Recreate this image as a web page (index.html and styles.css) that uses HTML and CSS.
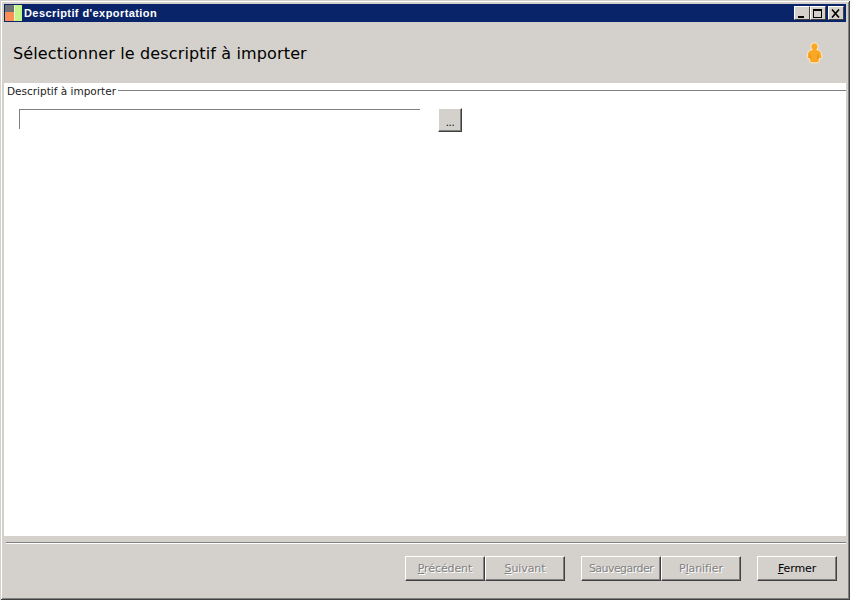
FILE: index.html
```html
<!DOCTYPE html>
<html lang="fr">
<head>
<meta charset="utf-8">
<title>Descriptif d'exportation</title>
<link rel="stylesheet" href="styles.css">
</head>
<body>
<div class="window">
  <div class="titlebar">
    <svg class="app-icon" width="17" height="16" viewBox="0 0 17 16">
      <rect x="0" y="0" width="9" height="7" fill="#6f7274"/>
      <rect x="0" y="7" width="9" height="9" fill="#fb8f55"/>
      <rect x="9" y="0" width="8" height="16" fill="#c5f58a"/>
      <rect x="9" y="0" width="1" height="16" fill="#e8ffd0"/>
    </svg>
    <span class="title">Descriptif d'exportation</span>
    <div class="caption-buttons">
      <button class="cap-btn"><svg width="10" height="9" viewBox="0 0 10 9"><rect x="1" y="7" width="6" height="2" fill="#000"/></svg></button>
      <button class="cap-btn"><svg width="10" height="9" viewBox="0 0 10 9"><path d="M0 0h9v9H0zM1 2v6h7V2z" fill="#000" fill-rule="evenodd"/></svg></button>
      <button class="cap-btn cap-close"><svg width="10" height="9" viewBox="0 0 10 9"><path d="M1 0.5l7 8M8 0.5l-7 8" stroke="#000" stroke-width="1.6" fill="none"/></svg></button>
    </div>
  </div>
  <header class="header">
    <h1 class="heading">Sélectionner le descriptif à importer</h1>
    <svg class="person" width="18" height="22" viewBox="0 0 18 22">
      <path d="M9 .7a4 4 0 0 1 2.700 7c3 .4 4.500 2 4.800 4.300l.4 3.300c.1.800-.4 1.300-1.100 1.300h-1.500l-.3 3.600c0 .4-.3.600-.7.600H5.700c-.4 0-.7-.2-.7-.6l-.3-3.600H3.200c-.7 0-1.200-.5-1.100-1.300l.4-3.300c.3-2.300 1.800-3.900 4.800-4.300A4 4 0 0 1 9 .7z" fill="#fba726" stroke="#fdeccb" stroke-width="1"/>
      <path d="M5 12.500l.3 4.400M13 12.500l-.3 4.400" stroke="#e08c14" stroke-width="1" fill="none"/>
    </svg>
  </header>
  <main class="content">
    <div class="group-head">
      <span class="group-label">Descriptif à importer</span>
      <span class="group-line"></span>
    </div>
    <div class="file-row">
      <div class="file-input"></div>
      <button class="browse">...</button>
    </div>
  </main>
  <footer class="footer">
    <div class="separator"></div>
    <div class="actions">
      <div class="btn-group">
        <button class="btn" disabled><u>P</u>récédent</button>
        <button class="btn" disabled><u>S</u>uivant</button>
      </div>
      <div class="btn-group">
        <button class="btn btn-tight" disabled>Sauvegarder</button>
        <button class="btn" disabled>P<u>l</u>anifier</button>
      </div>
      <button class="btn"><u>F</u>ermer</button>
    </div>
  </footer>
</div>
</body>
</html>
```
FILE: styles.css
```css
html, body {
  margin: 0;
  padding: 0;
  height: 100%;
  overflow: hidden;
}
body {
  font-family: "DejaVu Sans", Verdana, sans-serif;
  font-size: 11px;
  color: #000;
  background: #d4d1cc;
}
.window {
  box-sizing: border-box;
  width: 850px;
  height: 600px;
  padding: 4px;
  display: flex;
  flex-direction: column;
  background: #d4d1cc;
  box-shadow: inset 1px 1px 0 #d4d1cc, inset -1px -1px 0 #404040, inset 2px 2px 0 #fff, inset -2px -2px 0 #808080;
}
.titlebar {
  height: 18px;
  flex: none;
  display: flex;
  align-items: center;
  background: #0a246a;
  color: #fff;
  padding: 0 2px 0 1px;
}
.app-icon {
  flex: none;
  margin-right: 2px;
}
.title {
  font-family: "Liberation Sans", Arial, sans-serif;
  font-weight: 700;
  font-size: 11px;
  letter-spacing: 0.42px;
  white-space: nowrap;
}
.caption-buttons {
  margin-left: auto;
  display: flex;
}
.cap-btn {
  box-sizing: border-box;
  width: 16px;
  height: 14px;
  padding: 0;
  display: flex;
  align-items: center;
  justify-content: center;
  background: #d4d1cc;
  border: 1px solid;
  border-color: #fff #404040 #404040 #fff;
}
.cap-close {
  margin-left: 2px;
}
.header {
  height: 61px;
  flex: none;
  box-sizing: border-box;
  display: flex;
  align-items: center;
  justify-content: space-between;
  padding: 1px 23px 0 9px;
}
.heading {
  margin: 0;
  font-size: 16px;
  font-weight: 400;
  letter-spacing: 0.14px;
  white-space: nowrap;
}
.person {
  flex: none;
}
.content {
  flex: 1;
  min-height: 0;
  background: #fff;
  padding-top: 1px;
}
.group-head {
  display: flex;
  align-items: center;
  height: 13px;
  padding-left: 3px;
}
.group-label {
  font-size: 10.5px;
  white-space: nowrap;
  color: #222;
}
.group-line {
  flex: 1;
  height: 1px;
  margin-left: 2px;
  background: #808080;
}
.file-row {
  display: flex;
  align-items: flex-start;
  margin: 11px 0 0 15px;
}
.file-input {
  box-sizing: border-box;
  width: 401px;
  height: 20px;
  margin-top: 1px;
  border-top: 1px solid #808080;
  border-left: 1px solid #808080;
}
.browse {
  box-sizing: border-box;
  width: 24px;
  height: 24px;
  margin-left: 18px;
  padding: 4px 0 0;
  font: 10px "DejaVu Sans", sans-serif;
  letter-spacing: -0.4px;
  background: #d4d1cc;
  border: 1px solid;
  border-color: #fff #404040 #404040 #fff;
  box-shadow: inset -1px -1px 0 #808080;
}
.footer {
  height: 60px;
  flex: none;
  padding-left: 2px;
}
.separator {
  height: 1px;
  margin-top: 6px;
  background: #808080;
  border-bottom: 1px solid #fff;
}
.actions {
  display: flex;
  justify-content: flex-end;
  gap: 16px;
  margin-top: 12px;
  padding-right: 9px;
}
.btn-group {
  display: flex;
}
.btn {
  box-sizing: border-box;
  width: 80px;
  height: 25px;
  padding: 0;
  font: 11px "DejaVu Sans", sans-serif;
  letter-spacing: -0.1px;
  color: #000;
  background: #d4d1cc;
  border: 1px solid;
  border-color: #fff #404040 #404040 #fff;
  box-shadow: inset -1px -1px 0 #808080;
}
.btn-tight {
  letter-spacing: -0.55px;
}
.btn:disabled {
  color: #808080;
  text-shadow: 1px 1px 0 #fff;
}
```
